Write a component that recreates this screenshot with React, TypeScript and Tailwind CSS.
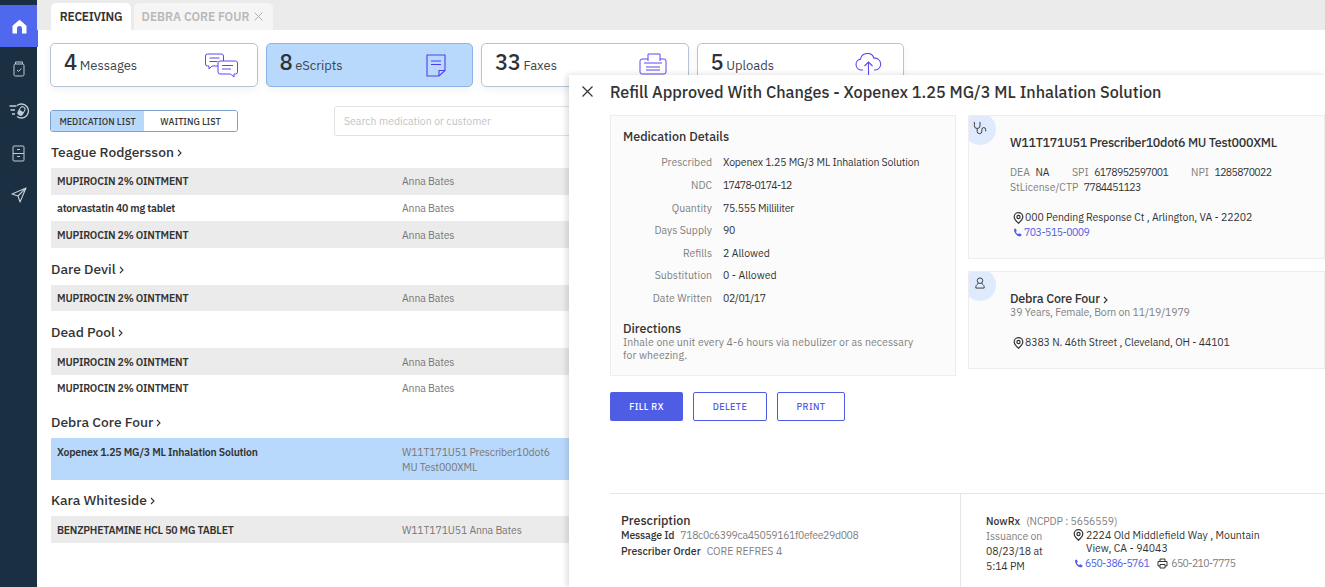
import { ReactNode } from "react"

type Rx = { drug: string; by: ReactNode; tone: "gray" | "white" | "blue" }

const groups: { name: string; rows: Rx[] }[] = [
  {
    name: "Teague Rodgersson",
    rows: [
      { drug: "MUPIROCIN 2% OINTMENT", by: "Anna Bates", tone: "gray" },
      { drug: "atorvastatin 40 mg tablet", by: "Anna Bates", tone: "white" },
      { drug: "MUPIROCIN 2% OINTMENT", by: "Anna Bates", tone: "gray" },
    ],
  },
  { name: "Dare Devil", rows: [{ drug: "MUPIROCIN 2% OINTMENT", by: "Anna Bates", tone: "gray" }] },
  {
    name: "Dead Pool",
    rows: [
      { drug: "MUPIROCIN 2% OINTMENT", by: "Anna Bates", tone: "gray" },
      { drug: "MUPIROCIN 2% OINTMENT", by: "Anna Bates", tone: "white" },
    ],
  },
  {
    name: "Debra Core Four",
    rows: [
      {
        drug: "Xopenex 1.25 MG/3 ML Inhalation Solution",
        by: (
          <>
            W11T171U51 Prescriber10dot6
            <br />
            MU Test000XML
          </>
        ),
        tone: "blue",
      },
    ],
  },
  { name: "Kara Whiteside", rows: [{ drug: "BENZPHETAMINE HCL 50 MG TABLET", by: "W11T171U51 Anna Bates", tone: "gray" }] },
]

const details = [
  ["Prescribed", "Xopenex 1.25 MG/3 ML Inhalation Solution", "tracking-[-0.15px]"],
  ["NDC", "17478-0174-12", "tracking-[-0.7px]"],
  ["Quantity", "75.555 Milliliter", "tracking-[-0.25px]"],
  ["Days Supply", "90", "tracking-[-0.4px]"],
  ["Refills", "2 Allowed", ""],
  ["Substitution", "0 - Allowed", ""],
  ["Date Written", "02/01/17", "tracking-[-0.4px]"],
]

function Chevron() {
  return (
    <svg width="5" height="8" viewBox="0 0 5 8" fill="none" stroke="currentColor" strokeWidth="1.1" className="ml-[3px] inline-block">
      <path d="M1 1l3 3-3 3" />
    </svg>
  )
}

function Pin() {
  return (
    <svg width="11" height="12" viewBox="0 0 11 12" fill="none" stroke="#333" strokeWidth="1.2" className="shrink-0">
      <path d="M5.5 11.2C3 9 1.2 7.2 1.2 5A4.3 4.3 0 0 1 9.8 5c0 2.2-1.8 4-4.3 6.2z" />
      <circle cx="5.5" cy="5" r="1.6" />
    </svg>
  )
}

function Phone() {
  return (
    <svg width="10" height="10" viewBox="0 0 10 10" fill="#4f5de4" className="shrink-0">
      <path d="M1 1.2L2.8.6l1 2.4-1 .8c.4 1.100 1.200 1.900 2.300 2.400l.9-1 2.500 1.100-.5 2C4.500 8.900 1 5.500 1 1.200z" />
    </svg>
  )
}

function StatCard({ count, label, active, icon }: { count: string; label: string; active?: boolean; icon: ReactNode }) {
  return (
    <div
      className={`flex h-[44px] w-[207.5px] items-center justify-between rounded-[5px] border pl-[13px] pr-[19px] shadow-[0_3px_8px_rgba(0,0,0,0.05)] ${
        active ? "border-[#8db4e8] bg-[#b9d9fc]" : "border-[#b4c3d6] bg-white"
      }`}
    >
      <div className="flex items-baseline gap-[3px] pb-[6px] text-[#2f3237]">
        <span className="text-[22px] font-medium leading-none tracking-[-0.5px]">{count}</span>
        <span className="text-[13px] leading-none text-[#3c4650]">{label}</span>
      </div>
      {icon}
    </div>
  )
}

export default function App() {
  return (
    <div className="relative flex h-[587px] w-[1325px] overflow-hidden bg-white font-['IBM_Plex_Sans','Noto_Sans',sans-serif] text-[#333]">
      {/* sidebar */}
      <aside className="flex w-[37px] shrink-0 flex-col items-stretch bg-[#1a2f42] pt-[5px] text-[#c3ccd4]">
        <div className="flex h-[42px] w-[38px] items-center justify-center bg-[#5068ee]">
          <svg width="15" height="15" viewBox="0 0 15 15" fill="#fff">
            <path d="M7.500.8L14.500 6.700V14a.6.6 0 0 1-.6.6H10V9.500a2.500 2.500 0 0 0-5 0v5.100H1.100a.6.6 0 0 1-.6-.6V6.700z" />
          </svg>
        </div>
        <div className="flex h-[43px] items-center justify-center">
          <svg width="12" height="16" viewBox="0 0 12 16" fill="none" stroke="currentColor" strokeWidth="1">
            <rect x="1" y="3" width="10" height="12" rx="1.500" />
            <path d="M2.500 3V1h7v2M4 9l1.500 1.500L8.300 7.500" />
          </svg>
        </div>
        <div className="flex h-[42px] items-center justify-center pl-[1px]">
          <svg width="20" height="16" viewBox="0 0 20 16" fill="none" stroke="currentColor" strokeWidth="1.300">
            <path d="M.5 3h7M1.500 7h4.500M3 11h3" />
            <path d="M8 2.600A7 7 0 1 1 8 13.400" />
            <g transform="rotate(30 12.500 8)">
              <rect x="10" y="3.500" width="5" height="9" rx="2.500" strokeWidth="1" />
              <path d="M10 8h5v2a2.500 2.500 0 0 1-5 0z" fill="currentColor" stroke="none" />
            </g>
          </svg>
        </div>
        <div className="flex h-[43px] items-center justify-center">
          <svg width="13" height="17" viewBox="0 0 13 17" fill="none" stroke="currentColor" strokeWidth="1">
            <rect x="1" y="1" width="11" height="15" rx="1" />
            <path d="M1 8.500h11M5 4.500h3M5 11.500h3" />
          </svg>
        </div>
        <div className="flex h-[40px] items-center justify-center">
          <svg width="16" height="16" viewBox="0 0 16 16" fill="none" stroke="currentColor" strokeWidth="1.100" strokeLinejoin="round">
            <path d="M15 1L1 7l6 2 2 6zM7 9l8-8" />
          </svg>
        </div>
      </aside>

      {/* main */}
      <main className="min-w-0 flex-1">
        <div className="flex h-[30px] items-end gap-[3px] bg-[#ebebeb] pl-[14px]">
          <div className="flex h-[27px] w-[80px] items-center justify-center rounded-t-[5px] bg-white text-[12px] font-semibold tracking-[-0.3px] text-[#333]">
            RECEIVING
          </div>
          <div className="flex h-[27px] w-[139px] items-center justify-center gap-[5px] rounded-t-[5px] bg-[#f5f5f5] pr-[2px] text-[12px] font-semibold text-[#b9b9b9]">
            DEBRA CORE FOUR
            <svg width="9" height="9" viewBox="0 0 9 9" stroke="#aaa" strokeWidth="0.9">
              <path d="M.5.500l8 8M8.500.500l-8 8" />
            </svg>
          </div>
        </div>

        <div className="mt-[13px] flex gap-[8px] pl-[13px]">
          <StatCard
            count="4"
            label="Messages"
            icon={
              <svg width="33" height="25" viewBox="0 0 33 25" fill="none" stroke="#5a49f2" strokeWidth="1">
                <path d="M2.500 1h14a2 2 0 0 1 2 2v8a2 2 0 0 1-2 2H7l-3 3v-3H2.500a2 2 0 0 1-2-2V3a2 2 0 0 1 2-2z" fill="#fff" />
                <path d="M4.500 5h10M4.500 8.500h8" />
                <path d="M15 8h15.500a2 2 0 0 1 2 2v9a2 2 0 0 1-2 2H29v3l-3.500-3H15a2 2 0 0 1-2-2v-9a2 2 0 0 1 2-2z" fill="#fff" />
                <path d="M17 12.500h11M17 16h9" />
              </svg>
            }
          />
          <StatCard
            count="8"
            label="eScripts"
            active
            icon={
              <svg width="20" height="23" viewBox="0 0 20 23" fill="none" stroke="#4d3ff0" strokeWidth="1.100" className="mr-[7px]">
                <path d="M1 1h18v15.500L13 22H1z" />
                <path d="M13 22v-5.500h6M5 7h10M5 10.500h10" />
              </svg>
            }
          />
          <StatCard
            count="33"
            label="Faxes"
            icon={
              <svg width="28" height="24" viewBox="0 0 28 24" fill="none" stroke="#5a49f2" strokeWidth="1" className="mr-[2px]">
                <path d="M9 8V1h12v7" />
                <path d="M9 6H3a2 2 0 0 0-2 2v11a2 2 0 0 0 2 2h22a2 2 0 0 0 2-2V8a2 2 0 0 0-2-2h-4" />
                <path d="M5 10h18M7 14h14M7 17h14" />
              </svg>
            }
          />
          <StatCard
            count="5"
            label="Uploads"
            icon={
              <svg width="27" height="24" viewBox="0 0 27 24" fill="none" stroke="#5a49f2" strokeWidth="1.100" className="mr-[2px]">
                <path d="M8 17H6.500a5.500 5.500 0 0 1-1-10.900A7 7 0 0 1 19 5.200 5.800 5.800 0 0 1 20.500 17H19" />
                <path d="M13.500 23V9.500M9.500 13l4-4 4 4" />
              </svg>
            }
          />
        </div>

        <div className="mt-[19px] flex items-start pl-[13px]">
          <div className="mt-[4px] flex h-[22px] w-[188px] overflow-hidden rounded-[3px] border border-[#7aa3d3] text-[9px] font-medium text-[#333]">
            <div className="flex w-[93px] items-center justify-center bg-[#b9d9fc] pt-px">MEDICATION LIST</div>
            <div className="flex flex-1 items-center justify-center bg-white pt-px">WAITING LIST</div>
          </div>
          <div className="ml-[96px] flex h-[30px] w-[300px] items-center rounded-[3px] border border-[#e2e2e2] pl-[9px] pt-px text-[10.5px] text-[#c4c4c4]">
            Search medication or customer
          </div>
        </div>

        <div className="pl-[14px]">
          {groups.map((g) => (
            <section key={g.name}>
              <h3 className="flex h-[32px] items-center pt-[2px] text-[13.8px] font-medium leading-none text-[#333]">
                {g.name}
                <Chevron />
              </h3>
              {g.rows.map((r, i) => (
                <div
                  key={i}
                  className={`flex w-[530px] text-[10.5px] ${
                    r.tone === "gray" ? "bg-[#ebebeb]" : r.tone === "blue" ? "bg-[#b9d9fc]" : "bg-white"
                  } ${r.tone === "blue" ? "h-[41.500px] items-start pt-[7px]" : "h-[26.700px] items-center pt-[2px]"}`}
                >
                  <div className="w-[351px] pl-[6px] font-semibold tracking-[-0.2px] text-[#333]">{r.drug}</div>
                  <div className={`tracking-[-0.15px] text-[#777] ${r.tone === "blue" ? "leading-[15px]" : ""}`}>{r.by}</div>
                </div>
              ))}
              <div className="h-[4.700px]" />
            </section>
          ))}
        </div>
      </main>

      {/* refill drawer */}
      <div className="absolute bottom-0 left-[569px] right-0 top-[75px] flex flex-col bg-white shadow-[-2px_0_6px_rgba(0,0,0,0.15)]">
        <div className="flex h-[40px] shrink-0 items-start">
          <svg width="11" height="11" viewBox="0 0 11 11" stroke="#333" strokeWidth="1.200" className="ml-[13px] mt-[11px]">
            <path d="M.5.500l10 10M10.500.500l-10 10" />
          </svg>
          <h1 className="ml-[17px] mt-[5px] text-[16.2px] font-medium leading-[24px] text-[#333]">
            Refill Approved With Changes - Xopenex 1.25 MG/3 ML Inhalation Solution
          </h1>
        </div>

        <div className="flex flex-1 gap-[12px] pl-[41px]">
          <div className="w-[346px] shrink-0">
            <div className="h-[261px] border border-[#ededed] bg-[#fbfbfb] pl-[12px] pt-[12px]">
              <h2 className="text-[12.5px] font-medium leading-[16px] text-[#333]">Medication Details</h2>
              <div className="mt-[8px]">
                {details.map(([k, v, t]) => (
                  <div key={k} className="flex h-[22.600px] items-center text-[10.5px]">
                    <span className="w-[89px] text-right text-[#808080]">{k}</span>
                    <span className={`ml-[11px] text-[#333] ${t}`}>{v}</span>
                  </div>
                ))}
              </div>
              <h2 className="mt-[11px] text-[12.5px] font-medium leading-[15px] text-[#333]">Directions</h2>
              <p className="w-[300px] text-[10.5px] leading-[13px] tracking-[0.08px] text-[#808080]">
                Inhale one unit every 4-6 hours via nebulizer or as necessary for wheezing.
              </p>
            </div>
            <div className="mt-[16px] flex gap-[10px] text-[9px] font-medium tracking-[0.4px]">
              <button className="h-[29px] w-[73px] rounded-[2px] bg-[#4f5de4] text-white">FILL RX</button>
              <button className="h-[29px] w-[74px] rounded-[2px] border border-[#4f5de4] text-[#4f5de4]">DELETE</button>
              <button className="h-[29px] w-[68px] rounded-[2px] border border-[#4f5de4] text-[#4f5de4]">PRINT</button>
            </div>
          </div>

          <div className="flex-1">
            <div className="relative h-[144px] overflow-hidden border border-[#ededed] bg-[#fbfbfb] pl-[41px] pt-[18px]">
              <div className="absolute -left-[5px] -top-[3px] flex h-[32px] w-[32px] items-center justify-center rounded-full bg-[#dfeafd] pb-[2px]">
                <svg width="14" height="15" viewBox="0 0 14 16" fill="none" stroke="#333" strokeWidth="1">
                  <path d="M1 1v4a3 3 0 0 0 6 0V1M4 8v3a2.500 2.500 0 0 0 5 0V9a2 2 0 0 1 4 0v2" />
                </svg>
              </div>
              <h2 className="text-[12.5px] font-medium leading-[16px] tracking-[-0.3px] text-[#333]">W11T171U51 Prescriber10dot6 MU Test000XML</h2>
              <div className="mt-[15px] flex text-[10.5px] leading-[15px]">
                <span className="w-[62px] text-[#808080]">
                  DEA <span className="ml-[3px] text-[#333]">NA</span>
                </span>
                <span className="w-[119px] text-[#808080]">
                  SPI <span className="ml-[3px] tracking-[-0.6px] text-[#333]">6178952597001</span>
                </span>
                <span className="text-[#808080]">
                  NPI <span className="ml-[3px] tracking-[-0.6px] text-[#333]">1285870022</span>
                </span>
              </div>
              <div className="text-[10.5px] leading-[15px] text-[#808080]">
                StLicense/CTP <span className="ml-[3px] tracking-[-0.6px] text-[#333]">7784451123</span>
              </div>
              <div className="mt-[15px] flex items-center gap-[1px] pl-[3px] text-[10.5px] leading-[15px]">
                <Pin />
                <span className="tracking-[-0.07px]">000 Pending Response Ct , Arlington, VA - 22202</span>
              </div>
              <div className="flex items-center gap-[1px] pl-[3px] text-[10.5px] leading-[15px] text-[#4f5de4]">
                <Phone />
                <span className="tracking-[-0.5px]">703-515-0009</span>
              </div>
            </div>
            <div className="relative mt-[12px] h-[98px] overflow-hidden border border-[#ededed] bg-[#fbfbfb] pl-[41px] pt-[19px]">
              <div className="absolute -left-[5px] -top-[3px] flex h-[32px] w-[32px] items-center justify-center rounded-full bg-[#dfeafd] pb-[5px]">
                <svg width="12" height="12" viewBox="0 0 12 13" fill="none" stroke="#333" strokeWidth="1">
                  <circle cx="6" cy="4" r="3" />
                  <path d="M4 6.500C4 8 1.500 8.500 1.500 10.500V12h9v-1.500C10.500 8.500 8 8 8 6.500" />
                </svg>
              </div>
              <h2 className="text-[12.5px] font-medium leading-[15px] tracking-[-0.2px] text-[#333]">
                Debra Core Four
                <Chevron />
              </h2>
              <div className="text-[10.5px] leading-[13px] tracking-[-0.12px] text-[#808080]">39 Years, Female, Born on 11/19/1979</div>
              <div className="mt-[16px] flex items-center gap-[1px] pl-[3px] text-[10.5px] leading-[15px]">
                <Pin />
                <span className="tracking-[-0.1px]">8383 N. 46th Street , Cleveland, OH - 44101</span>
              </div>
            </div>
          </div>
        </div>

        <div className="ml-[41px] flex h-[94px] shrink-0 border-t border-[#e6e6e6]">
          <div className="w-[351px] border-r border-[#e6e6e6] pl-[11px] pt-[19px] text-[10.5px] leading-[15.500px]">
            <div className="text-[12.5px] font-medium leading-[15px] text-[#333]">Prescription</div>
            <div>
              <span className="font-medium tracking-[-0.15px] text-[#333]">Message Id</span>
              <span className="ml-[6px] tracking-[-0.38px] text-[#808080]">718c0c6399ca45059161f0efee29d008</span>
            </div>
            <div>
              <span className="font-medium text-[#333]">Prescriber Order</span>
              <span className="ml-[6px] text-[#808080]">CORE REFRES 4</span>
            </div>
          </div>
          <div className="flex-1 pl-[25px] pt-[20px] text-[10.5px] leading-[15px]">
            <div>
              <span className="font-medium text-[#333]">NowRx</span>
              <span className="ml-[6px] tracking-[-0.1px] text-[#808080]">(NCPDP : 5656559)</span>
            </div>
            <div className="flex">
              <div className="w-[87px] shrink-0 leading-[15px] tracking-[-0.1px]">
                <span className="text-[#808080]">Issuance on</span>
                <br />
                08/23/18 at
                <br />
                5:14 PM
              </div>
              <div className="w-[190px]">
                <div className="flex gap-[2px]">
                  <Pin />
                  <span className="leading-[13px]">2224 Old Middlefield Way , Mountain View, CA - 94043</span>
                </div>
                <div className="mt-[1px] flex items-center gap-[1px] pl-[1px]">
                  <Phone />
                  <span className="tracking-[-0.6px] text-[#4f5de4]">650-386-5761</span>
                  <svg width="11" height="11" viewBox="0 0 11 11" fill="none" stroke="#333" strokeWidth="1" className="ml-[7px] mr-[2px]">
                    <path d="M3 3V1h5v2M3 8H1V3.500h9V8H8M3 6.500h5V10H3z" />
                  </svg>
                  <span className="tracking-[-0.6px] text-[#808080]">650-210-7775</span>
                </div>
              </div>
            </div>
          </div>
        </div>
      </div>
    </div>
  )
}
